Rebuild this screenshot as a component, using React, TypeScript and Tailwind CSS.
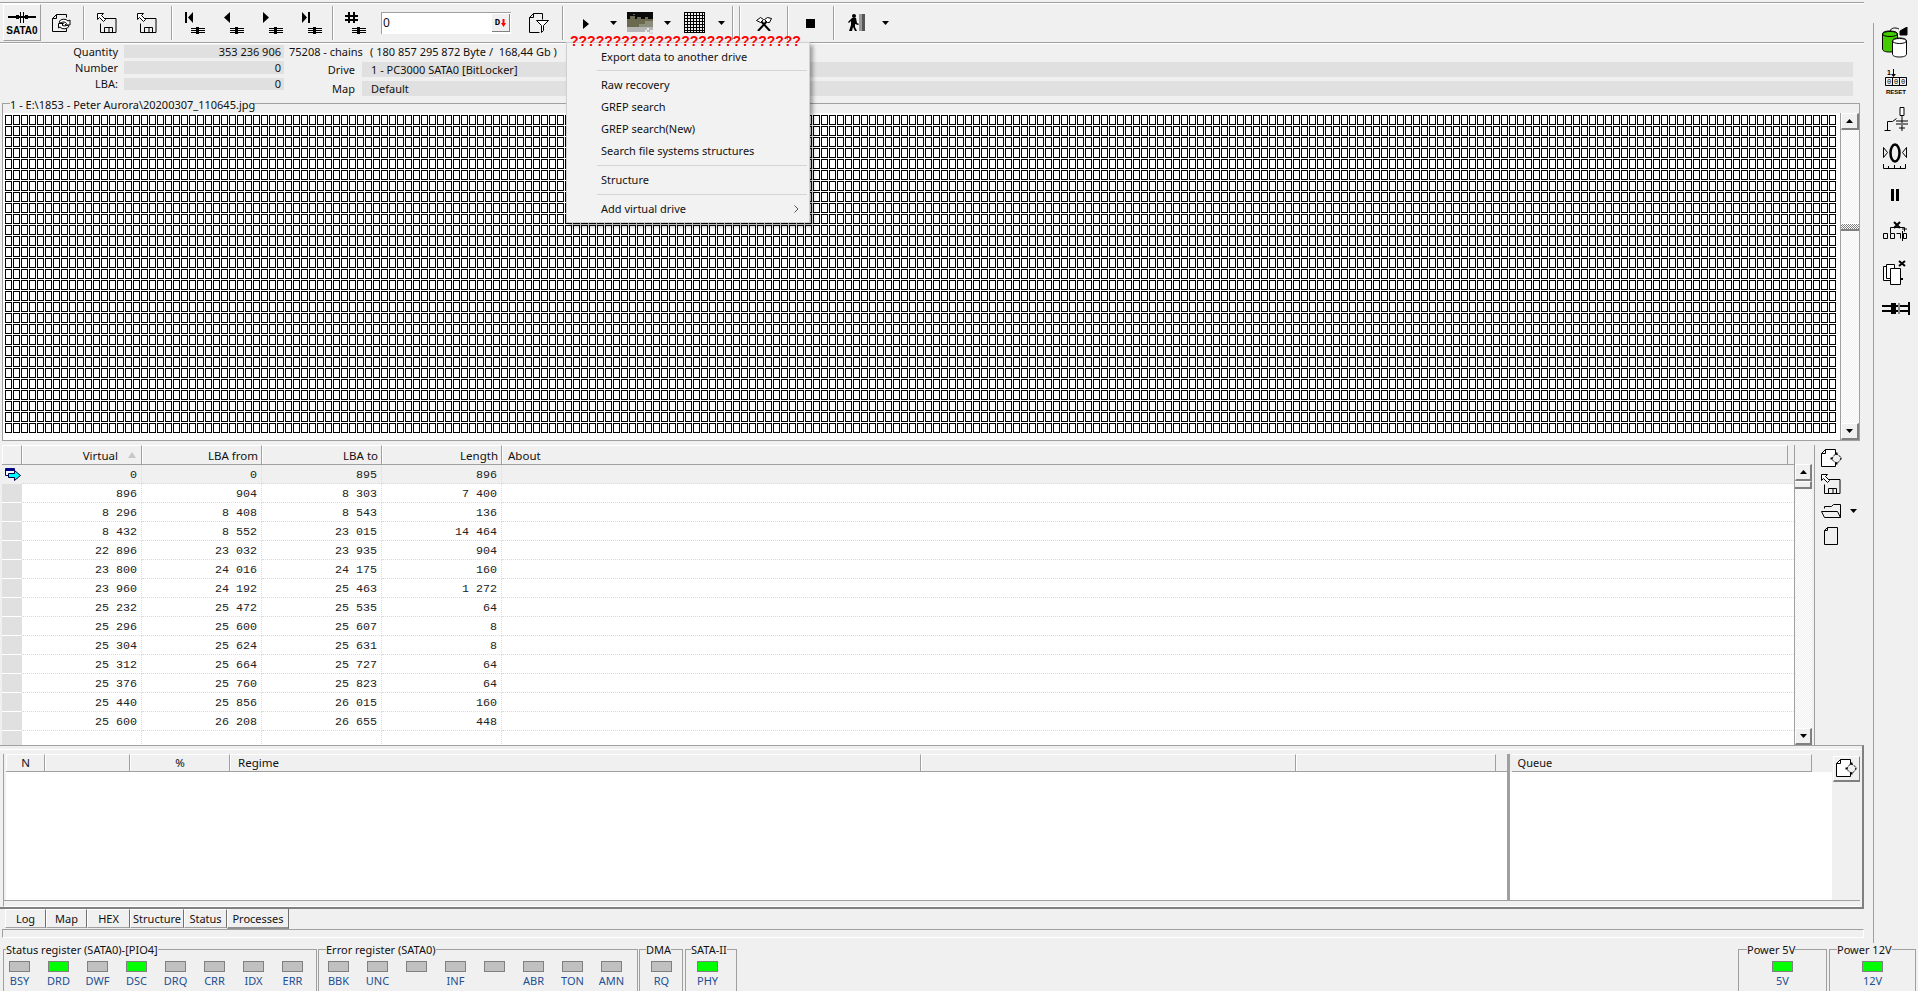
const ui = "font-['Noto_Sans',sans-serif]";

const rows = [
  ["0", "0", "895", "896"],
  ["896", "904", "8 303", "7 400"],
  ["8 296", "8 408", "8 543", "136"],
  ["8 432", "8 552", "23 015", "14 464"],
  ["22 896", "23 032", "23 935", "904"],
  ["23 800", "24 016", "24 175", "160"],
  ["23 960", "24 192", "25 463", "1 272"],
  ["25 232", "25 472", "25 535", "64"],
  ["25 296", "25 600", "25 607", "8"],
  ["25 304", "25 624", "25 631", "8"],
  ["25 312", "25 664", "25 727", "64"],
  ["25 376", "25 760", "25 823", "64"],
  ["25 440", "25 856", "26 015", "160"],
  ["25 600", "26 208", "26 655", "448"],
  ["", "", "", ""],
];

const statusLeds = [
  ["BSY", false], ["DRD", true], ["DWF", false], ["DSC", true],
  ["DRQ", false], ["CRR", false], ["IDX", false], ["ERR", false],
] as const;
const errorLeds = [
  ["BBK", false], ["UNC", false], ["", false], ["INF", false],
  ["", false], ["ABR", false], ["TON", false], ["AMN", false],
] as const;

const menuItems = [
  { label: "Export data to another drive", cls: "h-[21px]" },
  { sep: true, cls: "h-[7px]" },
  { label: "Raw recovery", cls: "h-[22px]" },
  { label: "GREP search", cls: "h-[22px]" },
  { label: "GREP search(New)", cls: "h-[22px]" },
  { label: "Search file systems structures", cls: "h-[22px]" },
  { sep: true, cls: "h-[7px]" },
  { label: "Structure", cls: "h-[22px]" },
  { sep: true, cls: "h-[7px]" },
  { label: "Add virtual drive", arrow: true, cls: "h-[22px]" },
];

function Track({ x = 6, y = 15 }: { x?: number; y?: number }) {
  return (
    <path
      d={`M${x} ${y + 1}h14v1h-14z M${x} ${y + 3}h14v1h-14z M${x} ${y + 5}h14v1h-14z M${x + 5} ${y}h3v7h-3z`}
      fill="#000"
    />
  );
}

function Caret({ className = "" }: { className?: string }) {
  return (
    <svg width="7" height="4" viewBox="0 0 7 4" className={className}>
      <path d="M0 0h7L3.5 4z" fill="#000" />
    </svg>
  );
}

function DocGear() {
  return (
    <svg width="21" height="19" viewBox="0 0 21 19" fill="none" stroke="#000">
      <path d="M4.500.5h10v17H.5V4.500zM4.500.5v4h-4" fill="#fff" />
      <circle cx="15.500" cy="9.500" r="4" fill="#f0f0f0" strokeDasharray="2 1" />
      <path d="M15.500 3.500v2M15.500 13.500v2M9.500 9.500h2M19.500 9.500h1" strokeWidth="2" strokeDasharray="2 1" />
    </svg>
  );
}

function SaveIcon() {
  return (
    <svg width="20" height="20" viewBox="0 0 20 20" fill="none" stroke="#000">
      <path d="M5.500 5.500h13.500v14H3.500v-9" />
      <path d="M7.500 19.500v-5h8v5M12 15v4" />
      <path d="M.5.5h6l-2 2 4 4-2 2-4-4-2 2z" fill="#fff" />
    </svg>
  );
}

function App() {
  return (
    <div className={`w-[1920px] h-[991px] bg-white overflow-hidden text-[11px] leading-[14px] text-[#111] ${ui}`}>
      <div className="relative w-[1918px] h-[991px] bg-[#f0f0f0] flex flex-col">
        <div className="flex h-[943px]">
          <div className="w-[1864px] flex flex-col">
            <Toolbar />
            <InfoPanel />
            <MapBox />
            <TableSection />
            <ProcessPanel />
            <Tabs />
            <div className="ml-[2px] h-[9px] border-t border-l border-t-[#a0a0a0] border-l-[#a0a0a0] border-b border-r border-b-white border-r-white" />
          </div>
          <SideBar />
        </div>
        <StatusRow />
        <ContextMenu />
      </div>
    </div>
  );
}

function Sep({ className }: { className: string }) {
  return <div className={`w-[2px] h-[34px] border-l border-l-[#a0a0a0] border-r border-r-white ${className}`} />;
}

function Toolbar() {
  return (
    <div className="mt-[2px] h-[41px] border-t border-b border-t-[#a0a0a0] border-b-[#a0a0a0] shadow-[0_1px_0_#fff,inset_0_1px_0_#fff] flex items-center">
      <div className="ml-[3px] w-[38px] h-[37px] flex flex-col items-center border-t border-l border-t-white border-l-white border-r border-b border-r-[#a0a0a0] border-b-[#a0a0a0]">
        <svg width="28" height="11" viewBox="0 0 28 11" className="mt-[7px]">
          <path d="M0 4h28v2H0zM12 0h1v11h-1zM15 0h1v11h-1zM8 3h3v4H8zM17 3h3v4h-3z" fill="#000" />
        </svg>
        <span className="mt-[2px] text-[10px] leading-[12px] font-bold text-black font-['Liberation_Sans',sans-serif]">SATA0</span>
      </div>

      <svg width="20" height="20" viewBox="0 0 20 20" fill="none" stroke="#000" className="ml-[11px] mt-[1px]">
        <path d="M4.500 1.500h10v3M4.500 1.500l-4 4v13h14v-3M.5 5.500h4v-4" />
        <path d="M7 9a5 4 0 0 1 9-1l2-1v5h-5l1.500-1.500A3 2 0 0 0 9 10zM17 13a5 4 0 0 1-9 1l-1.500 1v-4.500h5L10 12a3 2 0 0 0 5 0z" fill="#fff" />
      </svg>
      <Sep className="ml-[11px]" />

      <div className="ml-[12px] mt-[1px]"><SaveIcon /></div>
      <div className="ml-[20px] mt-[1px]"><SaveIcon /></div>
      <Sep className="ml-[14px]" />

      <svg width="20" height="22" viewBox="0 0 20 22" className="ml-[12px]">
        <path d="M0 0h2v11H0zM8 0v11L3 5.500z" fill="#000" /><Track />
      </svg>
      <svg width="20" height="22" viewBox="0 0 20 22" className="ml-[19px]">
        <path d="M6 0v11L0 5.500z" fill="#000" /><Track />
      </svg>
      <svg width="20" height="22" viewBox="0 0 20 22" className="ml-[19px]">
        <path d="M0 0v11l6-5.500z" fill="#000" /><Track />
      </svg>
      <svg width="20" height="22" viewBox="0 0 20 22" className="ml-[19px]">
        <path d="M0 0v11l5-5.500zM6 0h2v11H6z" fill="#000" /><Track />
      </svg>
      <Sep className="ml-[10px]" />

      <svg width="21" height="22" viewBox="0 0 21 22" className="ml-[11px]">
        <path d="M3 0h2v11H3zM8 0h2v11H8zM0 3h13v2H0zM0 7h13v2H0z" fill="#000" /><Track x={7} />
      </svg>
      <div className="ml-[15px] w-[130px] h-[22px] bg-white border-t border-l border-t-[#a0a0a0] border-l-[#a0a0a0] flex items-center justify-between pl-[1px] pr-[1px]">
        <span className="text-[12px]">0</span>
        <div className="w-[18px] h-[18px] bg-[#f0f0f0] border-r border-b border-r-[#808080] border-b-[#808080] flex items-center justify-center gap-px">
          <span className="text-[9px] leading-[10px] font-bold text-black font-['Liberation_Mono',monospace]">D</span>
          <svg width="5" height="8" viewBox="0 0 5 8"><path d="M1.500 0h2v4H5L2.500 8 0 4h1.500z" fill="#f00" /></svg>
        </div>
      </div>
      <svg width="21" height="22" viewBox="0 0 21 22" fill="none" stroke="#000" className="ml-[17px]">
        <path d="M5.500 1.500h9v6M5.500 1.500l-4 4v15h10M1.500 5.500h4v-4" />
        <path d="M8.500 8.500h12l-5 5v5l-2 2v-7z" fill="#fff" />
      </svg>
      <Sep className="ml-[13px]" />

      <svg width="6" height="10" viewBox="0 0 6 10" className="ml-[19px] mt-[2px]"><path d="M0 0l6 5-6 5z" fill="#000" /></svg>
      <Caret className="ml-[21px]" />
      <svg width="26" height="22" viewBox="0 0 26 22" className="ml-[10px]" shapeRendering="crispEdges">
        <path d="M0 0h26v7H0z" fill="#0a0a0a" />
        <path d="M3 4h5v3H3zM10 5h4v2h-4zM6 2h2v1H6zM18 5h3v2h-3z" fill="#6a6a4e" />
        <path d="M0 7h26v8H0z" fill="#6b6a50" />
        <path d="M18 9h8v6h-8zM12 12h6v3h-6z" fill="#8d8d7c" />
        <path d="M0 15h26v5H0z" fill="#b5b5b5" />
        <path d="M20 16h2v2h-2zM23 18h3v2h-3zM18 18h2v2h-2z" fill="#e8e8e8" />
        <path d="M22 20h4v2h-4z" fill="#ddd" />
      </svg>
      <Caret className="ml-[11px]" />
      <svg width="22" height="22" viewBox="0 0 22 22" className="ml-[13px]" fill="none" stroke="#000" shapeRendering="crispEdges">
        <path d="M.5.5h20v20H.5zM.5 3.500h20M.5 6.500h20M.5 9.500h20M.5 12.500h20M.5 15.500h20M.5 18.500h20M3.500.5v20M6.500.5v20M9.500.5v20M12.500.5v20M15.500.5v20M18.500.5v20" />
      </svg>
      <Caret className="ml-[12px]" />
      <Sep className="ml-[7px]" />
      <Sep className="ml-[5px]" />

      <svg width="16" height="14" viewBox="0 0 16 14" fill="none" stroke="#000" className="ml-[15px] mt-[2px]">
        <path d="M4 3l10 11M12 3L2 14" strokeWidth="2" />
        <path d="M.5 3.500l4-3 3 2-3 3zM8.500 2.500l3-2 4 1-2 4h-2z" fill="#fff" />
      </svg>
      <Sep className="ml-[15px]" />

      <div className="ml-[17px] mt-[1px] w-[9px] h-[9px] bg-black" />
      <Sep className="ml-[18px]" />

      <svg width="18" height="18" viewBox="0 0 18 18" className="ml-[13px]">
        <circle cx="6" cy="2" r="2" fill="#000" />
        <path d="M4 4h4l1 5 2 1-1 1-3-1v3l2 4H7l-2-4-1 4H1l2-6V7L1 9 0 8z" fill="#000" />
        <rect x="11" y="0" width="3" height="17" fill="#999" />
        <rect x="14" y="0" width="3" height="17" fill="#555" />
      </svg>
      <Caret className="ml-[16px]" />
    </div>
  );
}

function InfoPanel() {
  return (
    <div className="h-[54px] flex">
      <div className="w-[284px] flex flex-col pt-[2px]">
        <InfoLeft label="Quantity" value="353 236 906" cls="h-[13px] mb-[3px]" />
        <InfoLeft label="Number" value="0" cls="h-[13px] mb-[4px]" />
        <InfoLeft label="LBA:" value="0" cls="h-[12px]" />
      </div>
      <div className="w-[1569px] flex flex-col pt-[2px]">
        <div className="h-[13px] flex items-center mb-[4px]">
          <span className="ml-[5px] w-[81px] whitespace-nowrap">75208 - chains</span>
          <span className="whitespace-pre">( 180 857 295 872 Byte /  168,44 Gb )</span>
        </div>
        <InfoRight label="Drive" value="1 - PC3000 SATA0 [BitLocker]" />
        <div className="h-[4px]" />
        <InfoRight label="Map" value="Default" />
      </div>
    </div>
  );
}

function InfoLeft({ label, value, cls }: { label: string; value: string; cls: string }) {
  return (
    <div className={`flex items-center ${cls}`}>
      <span className="w-[118px] text-right">{label}</span>
      <div className="ml-[6px] flex-1 h-full bg-[#e0e0e0] text-right pr-[3px] flex items-center justify-end">{value}</div>
    </div>
  );
}

function InfoRight({ label, value }: { label: string; value: string }) {
  return (
    <div className="flex items-center h-[15px]">
      <span className="w-[71px] text-right">{label}</span>
      <div className="ml-[7px] flex-1 h-full bg-[#e0e0e0] pl-[9px] flex items-center">{value}</div>
    </div>
  );
}

function ScrollBtn({ down, cls }: { down?: boolean; cls: string }) {
  return (
    <div className={`flex items-center justify-center bg-[#f0f0f0] border-t border-l border-t-white border-l-white border-r-2 border-b-2 border-r-[#808080] border-b-[#808080] ${cls}`}>
      <svg width="7" height="4" viewBox="0 0 7 4">
        <path d={down ? "M0 0h7L3.500 4z" : "M3.500 0L7 4H0z"} fill="#000" />
      </svg>
    </div>
  );
}

const track = "bg-[repeating-conic-gradient(#f0f0f0_0_25%,#ffffff_0_50%)] bg-[length:2px_2px]";

function MapBox() {
  return (
    <fieldset className="ml-[2px] w-[1858px] h-[344px] border border-[#a0a0a0] flex flex-col">
      <legend className="ml-[7px] h-[12px] leading-[16px] whitespace-nowrap">1 - E:\1853 - Peter Aurora\20200307_110645.jpg</legend>
      <div className="mt-[4px] flex h-[327px]">
        <div className="w-[1838px] bg-white pl-[2px] pt-[2px] border-r border-r-[#a0a0a0] overflow-hidden">
          <div className="w-[1832px] flex flex-wrap content-start">
            {Array.from({ length: 229 * 29 }).map((_, i) => (
              <div key={i} className="w-[7px] h-[10px] mr-[1px] mb-[1px] border border-black" />
            ))}
          </div>
        </div>
        <div className={`w-[18px] flex flex-col justify-between relative ${track}`}>
          <ScrollBtn cls="h-[17px]" />
          <div className="absolute top-[110px] left-0 w-[18px] h-[8px] border-t border-white border-b-2 border-b-[#808080] bg-[repeating-conic-gradient(#808080_0_25%,#ffffff_0_50%)] bg-[length:2px_2px]" />
          <ScrollBtn down cls="h-[17px]" />
        </div>
      </div>
    </fieldset>
  );
}

function HeadCell({ cls, children }: { cls: string; children?: React.ReactNode }) {
  return (
    <div className={`h-full bg-[#f0f0f0] border-t border-l border-t-white border-l-white border-r border-r-[#a0a0a0] flex items-center shrink-0 text-[11.500px] ${cls}`}>
      {children}
    </div>
  );
}

function TableSection() {
  return (
    <div className="mt-[4px] flex h-[300px]">
      <div className="ml-[2px] w-[1792px] flex flex-col">
        <div className="h-[20px] flex border-b border-b-[#a0a0a0] pr-[6px]">
          <HeadCell cls="w-[20px]" />
          <HeadCell cls="w-[120px] justify-end pr-[23px] pt-[1px] relative">
            Virtual
            <svg width="8" height="6" viewBox="0 0 8 6" className="absolute right-[5px] top-[6px]"><path d="M4 0l4 6H0z" fill="#c8c8c8" /></svg>
          </HeadCell>
          <HeadCell cls="w-[120px] justify-end pr-[3px] pt-[1px]">LBA from</HeadCell>
          <HeadCell cls="w-[120px] justify-end pr-[3px] pt-[1px]">LBA to</HeadCell>
          <HeadCell cls="w-[120px] justify-end pr-[3px] pt-[1px]">Length</HeadCell>
          <HeadCell cls="flex-1 pl-[5px] pt-[1px]">About</HeadCell>
        </div>
        <div className="flex-1 bg-white overflow-hidden">
          {rows.map((r, i) => (
            <div key={i} className={`h-[19px] flex ${i === 0 ? "bg-[#f0f0f0]" : ""}`}>
              <div className={`w-[20px] shrink-0 flex items-center ${i === 0 ? "" : "bg-[#e0e0e0] border-b border-b-white"}`}>
                {i === 0 && (
                  <svg width="17" height="14" viewBox="0 0 17 14" className="ml-[3px]">
                    <path d="M.5.5h9v7h-9z" fill="#fff" stroke="#008" />
                    <path d="M1 1h8v2H1z" fill="#008" />
                    <path d="M3.500 5.500h6v-3l6 5-6 5v-3h-6z" fill="#0ff" stroke="#004" />
                  </svg>
                )}
              </div>
              {r.map((v, j) => (
                <div key={j} className="w-[120px] shrink-0 border-r border-b border-dotted border-[#dcdcdc] flex items-center justify-end pr-[4px] pt-[1px] text-[11.700px] font-['Liberation_Mono',monospace] whitespace-pre text-[#222]">
                  {v}
                </div>
              ))}
              <div className="flex-1 border-b border-dotted border-[#dcdcdc]" />
            </div>
          ))}
        </div>
      </div>
      <div className={`w-[18px] flex flex-col border-l border-l-[#a0a0a0] ${track}`}>
        <div className="h-[19px] bg-[#f0f0f0]" />
        <ScrollBtn cls="h-[17px]" />
        <div className="h-[8px] bg-[#f0f0f0] border-t border-white border-b-2 border-b-[#808080] border-r-2 border-r-[#808080]" />
        <div className="flex-1" />
        <ScrollBtn down cls="h-[17px]" />
      </div>
      <div className="ml-[2px] w-[50px] border-l border-l-[#a0a0a0] flex flex-col items-start pl-[6px] pt-[4px]">
        <DocGear />
        <div className="mt-[6px]"><SaveIcon /></div>
        <div className="mt-[10px] flex items-center">
          <svg width="20" height="14" viewBox="0 0 20 14" fill="none" stroke="#000">
            <path d="M3.500 4.500v-2h7l2-2h7v13h-16l-3-6h16l3 6" />
          </svg>
          <Caret className="ml-[9px]" />
        </div>
        <svg width="14" height="18" viewBox="0 0 14 18" fill="none" stroke="#000" className="mt-[9px] ml-[3px]">
          <path d="M3.500.5h10v17H.5V3.500zM3.500.5v3h-3" />
        </svg>
      </div>
    </div>
  );
}

function ProcessPanel() {
  return (
    <div className="h-[164px] border-t border-t-[#a0a0a0] border-r-2 border-b-2 border-r-[#808080] border-b-[#808080] flex flex-col">
      <div className="h-[154px] pt-[3px] flex flex-col">
        <div className="h-[5px] border-t border-t-white" />
        <div className="flex flex-1 ml-[3px] border-l border-l-[#a0a0a0] pl-[2px]">
          <div className="w-[1503px] flex flex-col">
            <div className="h-[18px] flex border-b border-b-[#a0a0a0]">
              <HeadCell cls="w-[39px] justify-center">N</HeadCell>
              <HeadCell cls="w-[85px]" />
              <HeadCell cls="w-[100px] justify-center">%</HeadCell>
              <HeadCell cls="w-[691px] pl-[7px]">Regime</HeadCell>
              <HeadCell cls="w-[375px]" />
              <HeadCell cls="w-[200px]" />
            </div>
            <div className="flex-1 bg-white" />
          </div>
          <div className="w-[3px] ml-[0px] bg-[#a0a0a0]" />
          <div className="w-[323px] flex flex-col">
            <div className="h-[18px] flex">
              <div className="w-[300px] ml-[2px] h-full border-t border-t-white border-r border-r-[#a0a0a0] border-b border-b-[#a0a0a0] pl-[6px] flex items-center">Queue</div>
              <div className="flex-1 border-b border-b-[#f0f0f0]" />
            </div>
            <div className="flex-1 bg-white" />
          </div>
          <div className="relative w-[30px]">
            <div className="absolute top-[2px] left-[1px] w-[27px] h-[26px] flex items-center justify-center border-t border-l border-t-white border-l-white border-r border-b-2 border-r-[#808080] border-b-[#808080]">
              <DocGear />
            </div>
          </div>
        </div>
      </div>
      <div className="flex-1 ml-[3px] border-t border-l border-t-[#a0a0a0] border-l-[#a0a0a0] border-b border-b-white mr-[2px]" />
    </div>
  );
}

function Tab({ label, cls }: { label: string; cls: string }) {
  return (
    <div className={`h-[19px] border-t border-l border-t-white border-l-white border-r border-b border-r-[#707070] border-b-[#a0a0a0] flex items-center justify-center ${cls}`}>
      {label}
    </div>
  );
}

function Tabs() {
  return (
    <div className="h-[21px] flex items-start pl-[5px] -mt-px pt-[1px] relative">
      <Tab label="Log" cls="w-[41px]" />
      <Tab label="Map" cls="w-[41px]" />
      <Tab label="HEX" cls="w-[43px]" />
      <Tab label="Structure" cls="w-[54px]" />
      <Tab label="Status" cls="w-[43px]" />
      <div className="w-[62px] h-[20px] border-l border-l-white border-r border-r-[#707070] border-b-2 border-b-[#909090] flex items-center justify-center pt-[2px]">Processes</div>
    </div>
  );
}

function Led({ label, on }: { label: string; on?: boolean }) {
  return (
    <div className="w-[21px] mr-[18px] flex flex-col items-center shrink-0">
      <div className={`w-[21px] h-[11px] border border-[#808080] ${on ? "bg-[#00ff00]" : "bg-[#c0c0c0]"}`} />
      <span className="mt-[2px] h-[14px] text-[#1c4f94] whitespace-nowrap">{label}</span>
    </div>
  );
}

function Group({ title, cls, legend, inner, children }: { title: string; cls: string; legend: string; inner: string; children: React.ReactNode }) {
  return (
    <fieldset className={`h-[60px] border border-[#a0a0a0] shrink-0 min-w-0 ${cls}`}>
      <legend className={`h-[12px] leading-[14px] whitespace-nowrap ${legend}`}>{title}</legend>
      <div className={`flex mt-[6px] ${inner}`}>{children}</div>
    </fieldset>
  );
}

function StatusRow() {
  return (
    <div className="h-[48px] flex overflow-hidden">
      <Group title="Status register (SATA0)-[PIO4]" cls="ml-[3px] w-[314px]" legend="ml-[2px]" inner="pl-[5px]">
        {statusLeds.map(([l, on], i) => <Led key={i} label={l} on={on} />)}
      </Group>
      <Group title="Error register (SATA0)" cls="ml-[1px] w-[320px]" legend="ml-[7px]" inner="pl-[9px]">
        {errorLeds.map(([l, on], i) => <Led key={i} label={l} on={on} />)}
      </Group>
      <Group title="DMA" cls="ml-[1px] w-[44px]" legend="ml-[6px]" inner="pl-[11px]"><Led label="RQ" /></Group>
      <Group title="SATA-II" cls="ml-[2px] w-[52px]" legend="ml-[5px]" inner="pl-[11px]"><Led label="PHY" on /></Group>
      <div className="flex-1" />
      <Group title="Power 5V" cls="w-[89px]" legend="ml-[8px]" inner="pl-[33px]"><Led label="5V" on /></Group>
      <Group title="Power 12V" cls="ml-[2px] w-[87px]" legend="ml-[7px]" inner="pl-[32px]"><Led label="12V" on /></Group>
      <div className="w-[2px]" />
    </div>
  );
}

function SideBar() {
  return (
    <div className="ml-[9px] mt-[23px] w-[45px] border-l border-l-[#a0a0a0] flex flex-col items-start">
      <svg width="26" height="31" viewBox="0 0 26 31" className="ml-[8px] mt-[4px]" stroke="#000" fill="none">
        <path d="M.5 7c0-2 3-3 7-3s8 1 8 3v15c0 2-4 3-8 3s-7-1-7-3z" fill="#44cc00" />
        <ellipse cx="8" cy="7" rx="7.500" ry="2.500" fill="#44cc00" />
        <path d="M10.500 14c0-2 3-3 7-3s7 1 7 3v13c0 2-3 3-7 3s-7-1-7-3z" fill="#fff" />
        <ellipse cx="17.500" cy="14" rx="7" ry="2.500" fill="#fff" />
        <path d="M8 4c1-3 5-4 9-2" />
        <path d="M18 4l7-4v8h-7z" fill="#000" />
      </svg>
      <svg width="22" height="28" viewBox="0 0 22 28" className="ml-[11px] mt-[9px]">
        <text x="2" y="8" fontSize="7" fontWeight="700" fontFamily="Liberation Sans, sans-serif">1</text>
        <path d="M8 2h1v5h2l-2.500 3L6 7h2z" fill="#000" />
        <path d="M.5 10.500h21v8H.5zM7.500 10.500v8M14.500 10.500v8" fill="none" stroke="#000" />
        <text x="2" y="17" fontSize="7" fontFamily="Liberation Mono, monospace">0</text>
        <text x="9" y="17" fontSize="7" fontFamily="Liberation Mono, monospace">0</text>
        <text x="16" y="17" fontSize="7" fontFamily="Liberation Mono, monospace">0</text>
        <text x="1" y="27" fontSize="6" fontWeight="700" fontFamily="Liberation Sans, sans-serif">RESET</text>
      </svg>
      <svg width="24" height="24" viewBox="0 0 24 24" className="ml-[10px] mt-[12px]" fill="none" stroke="#000">
        <path d="M.5 23.500h6M3.500 23.500v-9h5l4-3" />
        <path d="M17 .5h4v8h-4z M19 8v8M19 18v6" fill="#fff" transform="translate(-1 0)" />
        <path d="M12 14h12M12 17h12M15 21h6" />
      </svg>
      <svg width="24" height="27" viewBox="0 0 24 27" className="ml-[9px] mt-[12px]" fill="none" stroke="#000">
        <ellipse cx="12" cy="10" rx="4.500" ry="8.500" strokeWidth="2.500" />
        <path d="M.5 4.500l4 5-4 5zM23.500 4.500l-4 5 4 5z" />
        <path d="M.5 21v4.500h22V21M5.500 23v2M11.500 22v3M17.500 23v2" />
      </svg>
      <div className="ml-[17px] mt-[19px] flex gap-[2px]">
        <div className="w-[3px] h-[12px] bg-black" />
        <div className="w-[3px] h-[12px] bg-black" />
      </div>
      <svg width="24" height="20" viewBox="0 0 24 20" className="ml-[9px] mt-[20px]" fill="none" stroke="#000">
        <path d="M7.500 12V6.500h14v4" />
        <path d="M11 1l6 6M17 1l-6 6" strokeWidth="2" />
        <path d="M.5 12.500h4v5h-4zM7.500 12.500h4v5h-4zM13.500 12.500h4v5" />
        <path d="M19.500 10v10" />
        <path d="M20.500 12.500h3v5h-3zM19 8h5" />
      </svg>
      <svg width="24" height="25" viewBox="0 0 24 25" className="ml-[9px] mt-[19px]" fill="none" stroke="#000">
        <path d="M.5 6.500h8v14h-8z" fill="#fff" />
        <path d="M3.500 4.500h8v14h-8z" fill="#fff" />
        <path d="M7.500 8.500h10v16h-10z" fill="#fff" />
        <path d="M17 19h3" strokeWidth="2" />
        <path d="M16 1l6 5M22 1l-6 5" strokeWidth="2" />
      </svg>
      <svg width="28" height="13" viewBox="0 0 28 13" className="ml-[8px] mt-[17px]">
        <path d="M0 3h27v2H0zM0 8h27v2H0zM9 1h5v11H9z" fill="#000" />
        <path d="M16 1h2v11h-2z" fill="#888" />
        <path d="M26 0h2v13h-2z" fill="#000" />
      </svg>
    </div>
  );
}

function ContextMenu() {
  return (
    <>
      <div className="absolute left-[570px] top-[33px] text-[14px] leading-[16px] font-bold text-[#f00] font-['Liberation_Sans',sans-serif] whitespace-nowrap z-20">
        ???????????????????????????
      </div>
      <div className="absolute left-[566px] top-[42px] w-[244px] h-[181px] bg-[#f2f2f2] border border-[#d0d0d0] shadow-[3px_3px_4px_rgba(0,0,0,0.35)] pt-[3px] z-10">
        {menuItems.map((m, i) =>
          m.sep ? (
            <div key={i} className={`flex items-center pl-[30px] pr-[2px] ${m.cls}`}>
              <div className="w-full h-px bg-[#d4d4d4]" />
            </div>
          ) : (
            <div key={i} className={`flex items-center justify-between pl-[34px] pr-[10px] text-[#111] ${m.cls}`}>
              <span>{m.label}</span>
              {m.arrow && (
                <svg width="5" height="8" viewBox="0 0 5 8" fill="none" stroke="#555"><path d="M.5.5L4 4 .5 7.500" /></svg>
              )}
            </div>
          )
        )}
      </div>
    </>
  );
}

export default App;
